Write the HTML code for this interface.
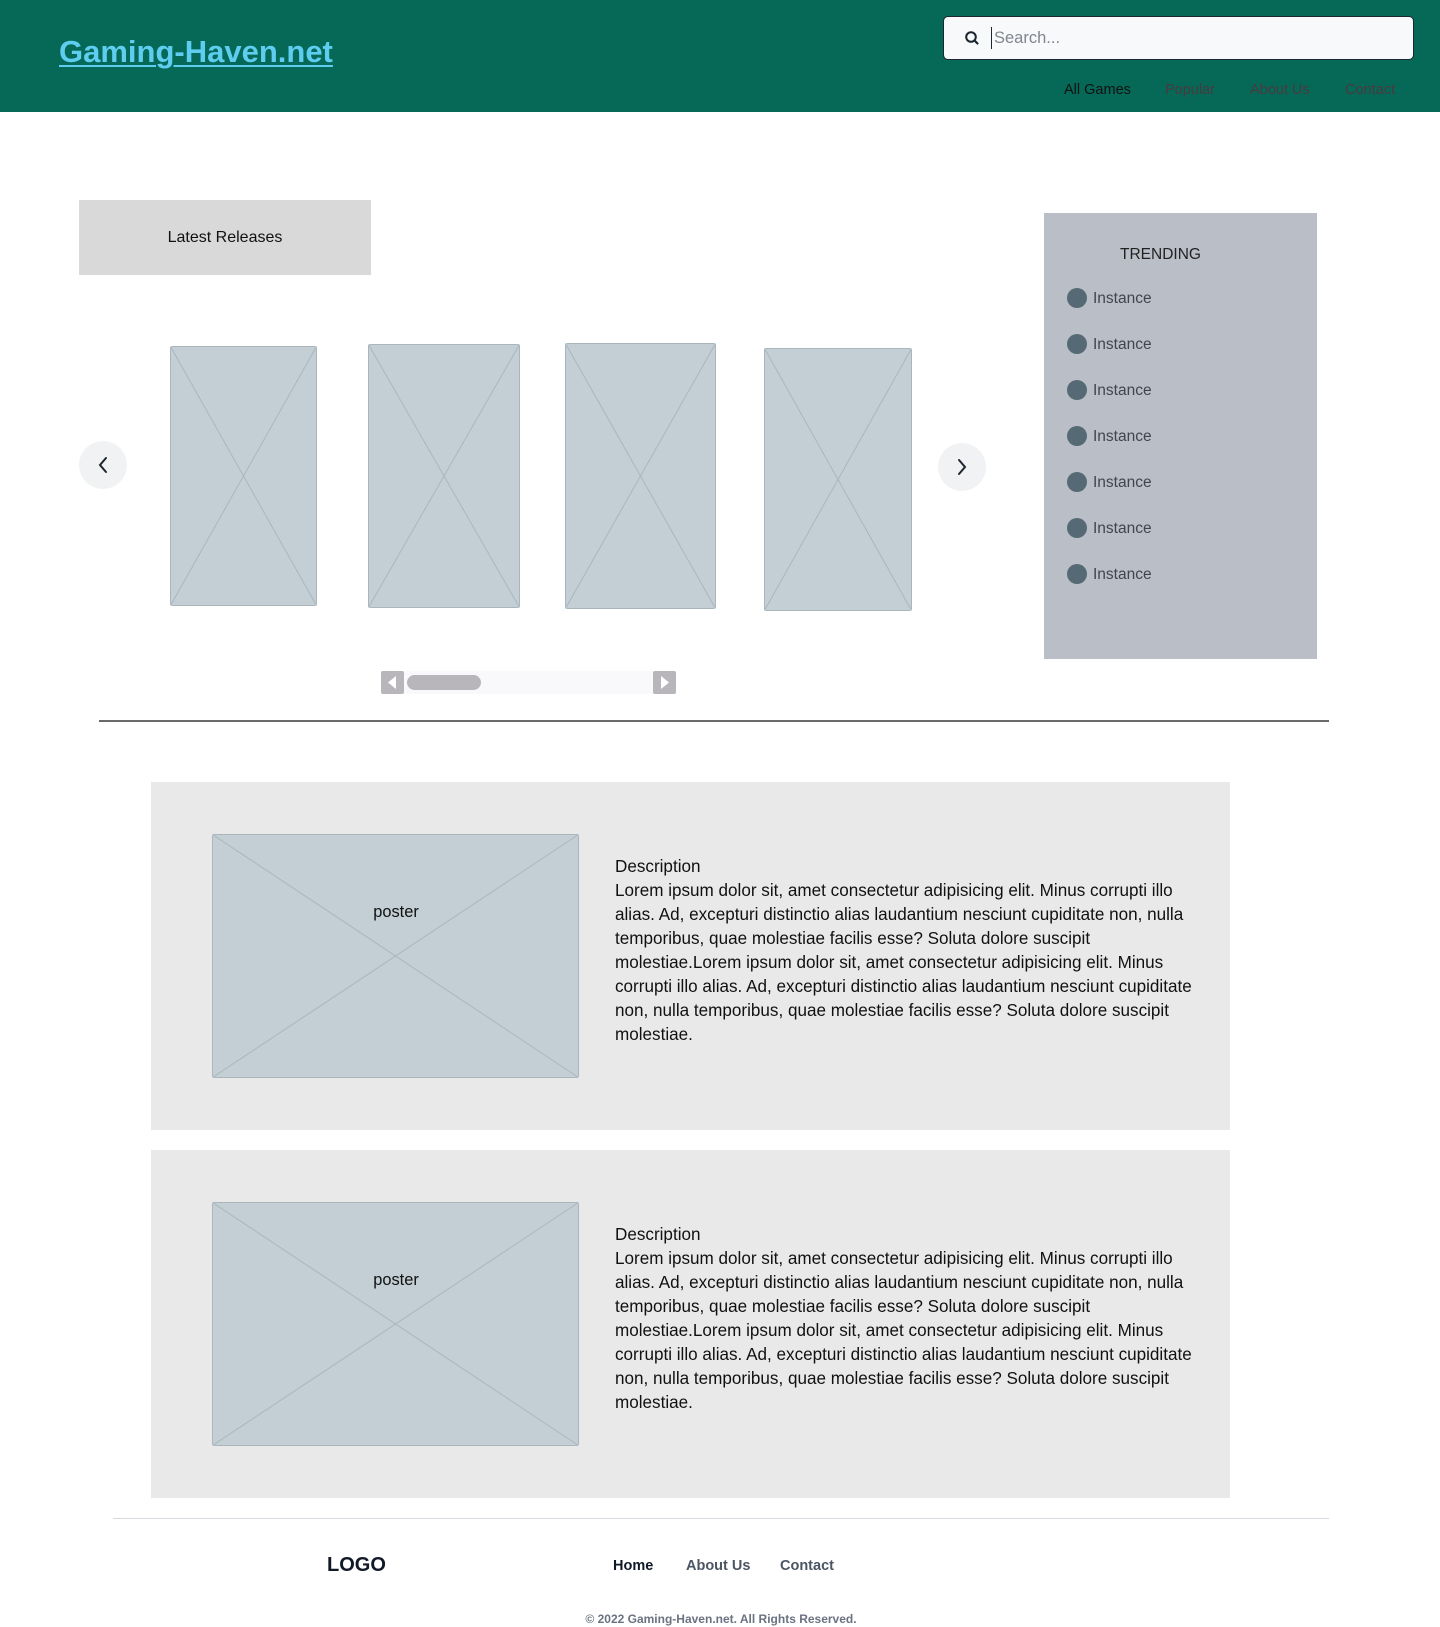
<!DOCTYPE html>
<html><head><meta charset="utf-8"><style>
*{margin:0;padding:0;box-sizing:border-box}
body{width:1440px;height:1627px;position:relative;background:#fff;font-family:"Liberation Sans",sans-serif;color:#111;overflow:hidden}
.abs{position:absolute}
header{position:absolute;left:0;top:0;width:1440px;height:112px;background:#066957}
.title{left:59px;top:34px;font-size:31px;font-weight:bold;color:#5ecdf0;text-decoration:underline;text-underline-offset:3px;text-decoration-thickness:2px}
.search{left:943px;top:16px;width:471px;height:44px;background:#f8f9fb;border:1.5px solid #1c2530;border-radius:5px}
.nav{top:82px;font-size:14.5px;color:#4a3a40}
.inst{left:1067px;font-size:15.5px;color:#3e4650}
.inst i{position:absolute;left:0;top:0;width:20px;height:20px;border-radius:50%;background:#566a75}
.inst span{position:absolute;left:26px;top:1px;white-space:nowrap}
.sec{left:151px;width:1079px;height:348px;background:#e9e9e9}
.desc{left:615px;font-size:17.1px;line-height:24px;white-space:nowrap;color:#111}
</style></head><body>
<header>
<div class="abs title">Gaming-Haven.net</div>
<div class="abs search">
<svg class="abs" style="left:20px;top:13px" width="16" height="16" viewBox="0 0 16 16"><circle cx="7" cy="7" r="4.8" fill="none" stroke="#1c2530" stroke-width="2"/><path d="M10.5 10.5L13.5 13.5" stroke="#1c2530" stroke-width="2.2" stroke-linecap="round"/></svg>
<div class="abs" style="left:47px;top:10px;width:1px;height:22px;background:#1c2530"></div>
<div class="abs" style="left:50px;top:12px;font-size:16.5px;color:#80858e">Search...</div>
</div>
<div class="abs nav" style="left:1064px;color:#111">All Games</div>
<div class="abs nav" style="left:1165px">Popular</div>
<div class="abs nav" style="left:1250px">About Us</div>
<div class="abs nav" style="left:1345px">Contact</div>
</header>

<div class="abs" style="left:79px;top:200px;width:292px;height:75px;background:#d9d9d9"></div>
<div class="abs" style="left:79px;top:229px;width:292px;text-align:center;font-size:16px">Latest Releases</div>

<svg class="abs" style="left:0;top:0" width="1000" height="720">
<g stroke="#a9b7bd" stroke-width="1" fill="#c3cfd4">
<rect x="170.5" y="346.5" width="146" height="259" rx="2"/><path d="M170.5 346.5L316.5 605.5M316.5 346.5L170.5 605.5"/>
<rect x="368.5" y="344.5" width="151" height="263" rx="2"/><path d="M368.5 344.5L519.5 607.5M519.5 344.5L368.5 607.5"/>
<rect x="565.5" y="343.5" width="150" height="265" rx="2"/><path d="M565.5 343.5L715.5 608.5M715.5 343.5L565.5 608.5"/>
<rect x="764.5" y="348.5" width="147" height="262" rx="2"/><path d="M764.5 348.5L911.5 610.5M911.5 348.5L764.5 610.5"/>
</g>
<ellipse cx="103" cy="465" rx="24" ry="24" fill="#f1f2f4"/>
<path d="M106 458L100 465L106 472" fill="none" stroke="#1c2530" stroke-width="2" stroke-linecap="round"/>
<ellipse cx="962" cy="467" rx="24" ry="24" fill="#f1f2f4"/>
<path d="M959 460L965 467L959 474" fill="none" stroke="#1c2530" stroke-width="2" stroke-linecap="round"/>
<rect x="381" y="671" width="295" height="23" fill="#f9f9fb"/>
<rect x="381" y="671" width="23" height="23" rx="2" fill="#b8b5bb"/>
<path d="M396 676L388 682.5L396 689Z" fill="#fff"/>
<rect x="653" y="671" width="23" height="23" rx="2" fill="#b8b5bb"/>
<path d="M661 676L669 682.5L661 689Z" fill="#fff"/>
<rect x="407" y="675" width="74" height="15" rx="7.5" fill="#b8b5bb"/>
</svg>

<div class="abs" style="left:1044px;top:213px;width:273px;height:446px;background:#babec6"></div>
<div class="abs" style="left:1120px;top:246px;font-size:15.5px;color:#222">TRENDING</div>
<div class="abs inst" style="top:288px"><i></i><span style="top:2px">Instance</span></div>
<div class="abs inst" style="top:334px"><i></i><span style="top:2px">Instance</span></div>
<div class="abs inst" style="top:380px"><i></i><span style="top:2px">Instance</span></div>
<div class="abs inst" style="top:426px"><i></i><span style="top:2px">Instance</span></div>
<div class="abs inst" style="top:472px"><i></i><span style="top:2px">Instance</span></div>
<div class="abs inst" style="top:518px"><i></i><span style="top:2px">Instance</span></div>
<div class="abs inst" style="top:564px"><i></i><span style="top:2px">Instance</span></div>

<div class="abs" style="left:99px;top:720px;width:1230px;height:2px;background:#6a6a6a"></div>

<div class="abs sec" style="top:782px"></div>
<div class="abs sec" style="top:1150px"></div>
<svg class="abs" style="left:0;top:0" width="600" height="1500">
<g stroke="#a9b7bd" stroke-width="1" fill="#c3cfd4">
<rect x="212.5" y="834.5" width="366" height="243" rx="2"/><path d="M212.5 834.5L578.5 1077.5M578.5 834.5L212.5 1077.5"/>
<rect x="212.5" y="1202.5" width="366" height="243" rx="2"/><path d="M212.5 1202.5L578.5 1445.5M578.5 1202.5L212.5 1445.5"/>
</g>
</svg>
<div class="abs" style="left:213px;top:903px;width:366px;text-align:center;font-size:16.4px">poster</div>
<div class="abs" style="left:213px;top:1271px;width:366px;text-align:center;font-size:16.4px">poster</div>

<div class="abs desc" style="top:855px">Description<br>Lorem ipsum dolor sit, amet consectetur adipisicing elit. Minus corrupti illo<br>alias. Ad, excepturi distinctio alias laudantium nesciunt cupiditate non, nulla<br>temporibus, quae molestiae facilis esse? Soluta dolore suscipit<br>molestiae.Lorem ipsum dolor sit, amet consectetur adipisicing elit. Minus<br>corrupti illo alias. Ad, excepturi distinctio alias laudantium nesciunt cupiditate<br>non, nulla temporibus, quae molestiae facilis esse? Soluta dolore suscipit<br>molestiae.</div>
<div class="abs desc" style="top:1223px">Description<br>Lorem ipsum dolor sit, amet consectetur adipisicing elit. Minus corrupti illo<br>alias. Ad, excepturi distinctio alias laudantium nesciunt cupiditate non, nulla<br>temporibus, quae molestiae facilis esse? Soluta dolore suscipit<br>molestiae.Lorem ipsum dolor sit, amet consectetur adipisicing elit. Minus<br>corrupti illo alias. Ad, excepturi distinctio alias laudantium nesciunt cupiditate<br>non, nulla temporibus, quae molestiae facilis esse? Soluta dolore suscipit<br>molestiae.</div>

<div class="abs" style="left:113px;top:1518px;width:1216px;height:1px;background:#d8d8de"></div>
<div class="abs" style="left:327px;top:1554px;font-size:20px;font-weight:bold;color:#111827">LOGO</div>
<div class="abs" style="left:613px;top:1558px;font-size:14.5px;font-weight:bold;color:#111827">Home</div>
<div class="abs" style="left:686px;top:1558px;font-size:14.5px;font-weight:bold;color:#4b5563">About Us</div>
<div class="abs" style="left:780px;top:1558px;font-size:14.5px;font-weight:bold;color:#4b5563">Contact</div>
<div class="abs" style="left:520px;top:1612px;width:402px;text-align:center;font-size:12px;font-weight:bold;color:#6b7280">© 2022 Gaming-Haven.net. All Rights Reserved.</div>
</body></html>
